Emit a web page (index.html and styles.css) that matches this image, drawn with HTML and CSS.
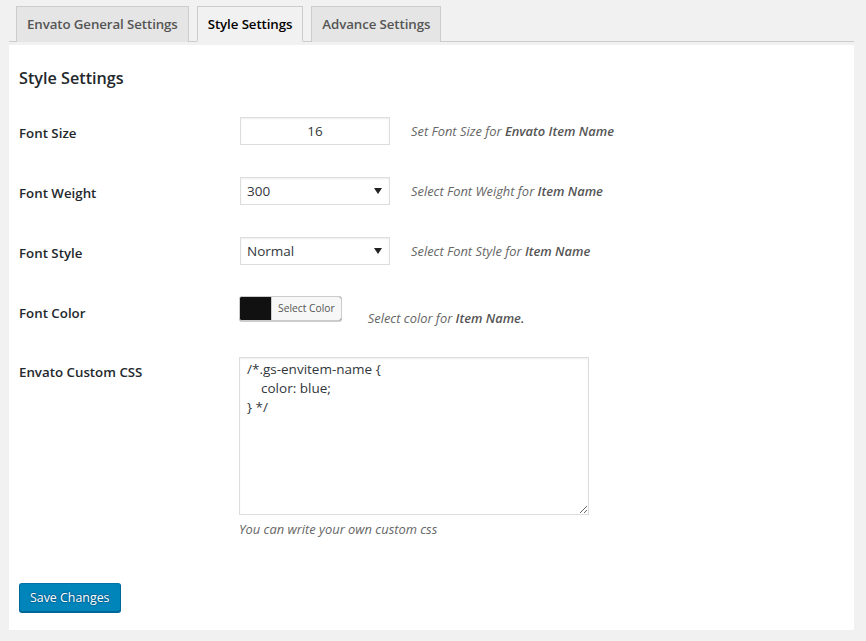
FILE: index.html
```
<!DOCTYPE html>
<html>
<head>
<meta charset="utf-8">
<link rel="stylesheet" href="styles.css">
</head>
<body>
<div class="wrap">
  <nav class="tabs">
    <a class="tab">Envato General Settings</a>
    <a class="tab active">Style Settings</a>
    <a class="tab">Advance Settings</a>
  </nav>
  <div class="panel">
    <h2 class="title">Style Settings</h2>
    <div class="form">
      <div class="row">
        <div class="label">Font Size</div>
        <div class="field field-mid">
          <input class="text-input" type="text" value="16">
          <span class="desc">Set Font Size for <b>Envato Item Name</b></span>
        </div>
      </div>
      <div class="row">
        <div class="label">Font Weight</div>
        <div class="field field-mid">
          <select class="select"><option>300</option></select>
          <span class="desc">Select Font Weight for <b>Item Name</b></span>
        </div>
      </div>
      <div class="row">
        <div class="label">Font Style</div>
        <div class="field field-mid">
          <select class="select"><option>Normal</option></select>
          <span class="desc">Select Font Style for <b>Item Name</b></span>
        </div>
      </div>
      <div class="row">
        <div class="label">Font Color</div>
        <div class="field field-color">
          <button class="color-btn" type="button"><span class="swatch"></span><span class="color-text">Select Color</span></button>
          <span class="desc desc-color">Select color for <b>Item Name.</b></span>
        </div>
      </div>
      <div class="row">
        <div class="label">Envato Custom CSS</div>
        <div class="field field-col">
          <textarea class="css-area">/*.gs-envitem-name {
    color: blue;
} */</textarea>
          <span class="desc">You can write your own custom css</span>
        </div>
      </div>
    </div>
    <div class="submit">
      <button class="save" type="button">Save Changes</button>
    </div>
  </div>
</div>
</body>
</html>
```
FILE: styles.css
```
html, body {
  margin: 0;
  padding: 0;
  background: #f1f1f1;
}
body {
  font-family: "Open Sans", "Noto Sans", sans-serif;
  color: #23282d;
  font-size: 13px;
}
.wrap {
  width: 845px;
  margin-left: 9px;
  padding-top: 6px;
}
.tabs {
  display: flex;
  border-bottom: 1px solid #ccc;
  padding-left: 7px;
  gap: 8px;
}
.tab {
  display: block;
  border: 1px solid #ccc;
  border-bottom: none;
  background: #e5e5e5;
  color: #555;
  font-size: 13.3px;
  font-weight: 600;
  line-height: 24px;
  padding: 5px 10px;
  margin-bottom: -1px;
  letter-spacing: -0.1px;
}
.tab.active {
  background: #f1f1f1;
  color: #000;
  border-bottom: 1px solid #f1f1f1;
}
.panel {
  background: #fff;
  margin-top: 3px;
  padding: 1px 10px 18px;
}
.title {
  font-size: 16.2px;
  font-weight: 600;
  margin: 20px 0 0;
  line-height: 24px;
  color: #23282d;
}
.form {
  display: flex;
  flex-direction: column;
  margin-top: 12px;
}
.row {
  display: flex;
  align-items: flex-start;
}
.label {
  width: 221px;
  flex: none;
  font-size: 13.3px;
  font-weight: 600;
  line-height: 18px;
  padding-top: 22px;
  color: #23282d;
}
.field {
  display: flex;
  padding: 15px 0 17px;
}
.field-mid {
  align-items: center;
  gap: 21px;
}
.field-color {
  align-items: flex-end;
  padding-top: 14px;
  padding-bottom: 20px;
  margin-left: -1px;
}
.field-col {
  flex-direction: column;
  padding-top: 16px;
  padding-bottom: 0;
  gap: 5px;
  margin-left: -1px;
}
.text-input, .select {
  box-sizing: border-box;
  width: 150px;
  height: 28px;
  border: 1px solid #ddd;
  box-shadow: inset 0 1px 2px rgba(0,0,0,.07);
  background-color: #fff;
  color: #32373c;
  font-family: "Open Sans", "Noto Sans", sans-serif;
  font-size: 13.5px;
  margin: 0;
  outline: none;
}
.text-input {
  text-align: center;
  padding: 0 8px;
}
.select {
  -webkit-appearance: none;
  appearance: none;
  padding: 0 6px;
  border-radius: 0;
  background-image: url("data:image/svg+xml;utf8,<svg xmlns='http://www.w3.org/2000/svg' width='8' height='6'><path d='M0 0H8L4 6Z' fill='%23222'/></svg>");
  background-repeat: no-repeat;
  background-position: right 7px center;
}
.desc {
  font-style: italic;
  color: #666;
  font-size: 12.9px;
  line-height: 18px;
}
.desc b {
  font-weight: 600;
  color: #555;
}
.desc-color {
  margin-left: 26px;
  margin-bottom: -6px;
}
.color-btn {
  display: flex;
  height: 25px;
  padding: 0;
  border: 1px solid #ccc;
  border-radius: 3px;
  background: #111;
  box-shadow: 0 1px 0 #ccc;
  overflow: hidden;
  cursor: pointer;
  margin: 0;
}
.swatch {
  width: 31px;
  height: 100%;
  background: #111;
}
.color-text {
  display: block;
  height: 100%;
  line-height: 23px;
  padding: 0 6px;
  font-family: "Open Sans", "Noto Sans", sans-serif;
  font-size: 10.3px;
  color: #555;
  background: #f7f7f7;
  border-left: 1px solid #ccc;
}
.css-area {
  box-sizing: border-box;
  width: 350px;
  height: 158px;
  margin: 0;
  border: 1px solid #ddd;
  box-shadow: inset 0 1px 2px rgba(0,0,0,.07);
  padding: 2px 7px;
  font-family: "Open Sans", "Noto Sans", sans-serif;
  font-size: 13.5px;
  line-height: 19px;
  color: #32373c;
  resize: both;
  outline: none;
}
.submit {
  margin-top: 45px;
}
.save {
  height: 29px;
  padding: 0 10px;
  background: #0085ba;
  border: 1px solid;
  border-color: #0073aa #006799 #006799;
  border-radius: 3px;
  box-shadow: 0 1px 0 #006799;
  color: #fff;
  font-family: "Open Sans", "Noto Sans", sans-serif;
  font-size: 12.4px;
  line-height: 26px;
  text-shadow: 0 -1px 1px #006799, 1px 0 1px #006799, 0 1px 1px #006799, -1px 0 1px #006799;
  cursor: pointer;
}
```
